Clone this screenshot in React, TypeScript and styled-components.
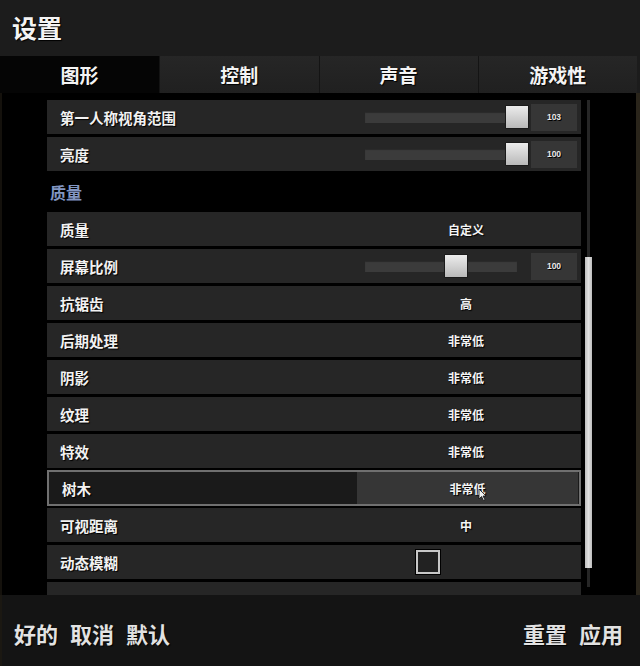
import React from "react";
import styled, { createGlobalStyle } from "styled-components";

const Global = createGlobalStyle`
  html, body { margin: 0; padding: 0; background: #000; }
  body { font-family: "Noto Sans CJK SC", "Noto Sans", sans-serif; color: #f2f2f2; }
  * { box-sizing: border-box; }
`;

const Frame = styled.div`
  width: 640px;
  height: 666px;
  display: flex;
  flex-direction: column;
  background: #000;
  overflow: hidden;
`;

const Header = styled.header`
  height: 56px;
  flex: none;
  background: #1c1c1c;
  display: flex;
  align-items: center;
  padding-left: 12px;
  padding-bottom: 2px;
`;

const Title = styled.h1`
  margin: 0;
  font-size: 25px;
  font-weight: 700;
  color: #f4f4f4;
  text-shadow: 1px 1px 1px #000;
`;

const Tabs = styled.nav`
  height: 37px;
  flex: none;
  display: grid;
  grid-template-columns: repeat(4, 1fr);
  background: #1c1c1c;
  padding-right: 3px;
`;

const Tab = styled.div<{ $active?: boolean }>`
  display: flex;
  align-items: center;
  justify-content: center;
  font-size: 19px;
  font-weight: 700;
  color: #f4f4f4;
  text-shadow: 1px 1px 1px #000;
  background: ${(p) => (p.$active ? "#050505" : "linear-gradient(#262626, #202020)")};
  border-left: ${(p) => (p.$active ? "none" : "1px solid #141414")};
  padding-bottom: 1px;
`;

const Body = styled.main`
  flex: 1;
  display: flex;
  background: #000;
  overflow: hidden;
  border-right: 4px solid #2a251b;
  border-left: 2px solid #14110c;
`;

const List = styled.div`
  width: 534px;
  margin-left: 45px;
  padding-top: 7px;
  display: flex;
  flex-direction: column;
  gap: 3px;
`;

const Row = styled.div<{ $selected?: boolean }>`
  flex: none;
  display: grid;
  grid-template-columns: 308px 1fr;
  align-items: stretch;
  background: ${(p) => (p.$selected ? "#1a1a1a" : "#262626")};
  border: ${(p) => (p.$selected ? "2px solid #707070" : "none")};
  margin: ${(p) => (p.$selected ? "-1px 0 -1px 0" : "0")};
  height: ${(p) => (p.$selected ? "36px" : "34px")};
`;

const Label = styled.div`
  display: flex;
  align-items: center;
  padding-left: 13px;
  font-size: 14.5px;
  font-weight: 700;
  color: #f2f2f2;
  text-shadow: 1px 1px 1px #000;
`;

const ValueCell = styled.div<{ $selected?: boolean; $start?: boolean }>`
  position: relative;
  display: flex;
  align-items: center;
  justify-content: ${(p) => (p.$start ? "flex-start" : "center")};
  padding-left: ${(p) => (p.$start ? "61px" : "0")};
  margin-right: ${(p) => (p.$selected ? "1px" : "4px")};
  background: ${(p) => (p.$selected ? "#363636" : "transparent")};
  font-size: 12px;
  font-weight: 700;
  color: #f4f4f4;
  text-shadow: 1px 1px 1px #000;
`;

const SliderCell = styled.div`
  display: flex;
  align-items: center;
  padding-left: 10px;
  padding-right: 4px;
`;

const Track = styled.div`
  position: relative;
  width: 152px;
  height: 11px;
  background: #3b3b3b;
  box-shadow: inset 0 1px 1px #2a2a2a;
`;

const Thumb = styled.div`
  position: absolute;
  top: 50%;
  width: 24px;
  height: 24px;
  transform: translate(-50%, -50%);
  background: linear-gradient(#ececec, #b9b9b9);
  border: 1px solid #1a1a1a;
  border-radius: 1px;
`;

const NumBox = styled.div`
  margin-left: auto;
  width: 46px;
  height: 27px;
  background: #363636;
  display: flex;
  align-items: center;
  justify-content: center;
  font-family: "Liberation Sans", Arial, sans-serif;
  font-size: 8.5px;
  font-weight: 700;
  color: #e8e8e8;
  text-shadow: 1px 1px 0 #000;
`;

const Section = styled.div`
  flex: none;
  height: 35px;
  display: flex;
  align-items: center;
  padding-left: 3px;
  font-size: 16px;
  font-weight: 700;
  color: #8296c2;
`;

const Check = styled.div`
  width: 24px;
  height: 24px;
  border: 2px solid #c8c8c8;
  background: #222;
  box-shadow: 0 0 0 1px #000;
`;

const Cursor = styled.svg`
  position: absolute;
  left: 121px;
  top: 16px;
`;

const ScrollCol = styled.div`
  width: 8px;
  margin-left: 3px;
  padding-top: 7px;
  display: flex;
  flex-direction: column;
  align-items: center;
`;

const ScrollTrack = styled.div`
  width: 3px;
  flex: 1;
  margin-bottom: 8px;
  background: #262626;
  display: flex;
  flex-direction: column;
  align-items: center;
`;

const ScrollThumb = styled.div`
  flex: none;
  width: 7px;
  height: 311px;
  margin-top: 157px;
  background: linear-gradient(90deg, #bdbdbd, #e0e0e0, #bdbdbd);
`;

const Footer = styled.footer`
  height: 71px;
  flex: none;
  background: #141414;
  display: flex;
  align-items: center;
  justify-content: space-between;
  padding: 4px 17px 0 12px;
  border-left: 2px solid #1b1812;
`;

const BtnGroup = styled.div`
  display: flex;
  gap: 12px;
`;

const FootBtn = styled.span`
  font-size: 22px;
  font-weight: 700;
  color: #e2e2e2;
  text-shadow: 1px 1px 1px #000;
`;

type Item =
  | { kind: "slider"; label: string; pos: number; value: string }
  | { kind: "text"; label: string; value: string; selected?: boolean }
  | { kind: "check"; label: string }
  | { kind: "section"; label: string }
  | { kind: "blank" };

const items: Item[] = [
  { kind: "slider", label: "第一人称视角范围", pos: 1, value: "103" },
  { kind: "slider", label: "亮度", pos: 1, value: "100" },
  { kind: "section", label: "质量" },
  { kind: "text", label: "质量", value: "自定义" },
  { kind: "slider", label: "屏幕比例", pos: 0.6, value: "100" },
  { kind: "text", label: "抗锯齿", value: "高" },
  { kind: "text", label: "后期处理", value: "非常低" },
  { kind: "text", label: "阴影", value: "非常低" },
  { kind: "text", label: "纹理", value: "非常低" },
  { kind: "text", label: "特效", value: "非常低" },
  { kind: "text", label: "树木", value: "非常低", selected: true },
  { kind: "text", label: "可视距离", value: "中" },
  { kind: "check", label: "动态模糊" },
  { kind: "blank" },
];

export default function App() {
  return (
    <>
      <Global />
      <Frame>
        <Header>
          <Title>设置</Title>
        </Header>
        <Tabs>
          <Tab $active>图形</Tab>
          <Tab>控制</Tab>
          <Tab>声音</Tab>
          <Tab>游戏性</Tab>
        </Tabs>
        <Body>
          <List>
            {items.map((it, i) => {
              if (it.kind === "section") return <Section key={i}>{it.label}</Section>;
              if (it.kind === "blank") return <Row key={i} />;
              if (it.kind === "slider")
                return (
                  <Row key={i}>
                    <Label>{it.label}</Label>
                    <SliderCell>
                      <Track>
                        <Thumb style={{ left: `${it.pos * 100}%` }} />
                      </Track>
                      <NumBox>{it.value}</NumBox>
                    </SliderCell>
                  </Row>
                );
              if (it.kind === "check")
                return (
                  <Row key={i}>
                    <Label>{it.label}</Label>
                    <ValueCell $start>
                      <Check />
                    </ValueCell>
                  </Row>
                );
              return (
                <Row key={i} $selected={it.selected}>
                  <Label>{it.label}</Label>
                  <ValueCell $selected={it.selected}>
                    {it.value}
                    {it.selected && (
                      <Cursor width="9" height="13" viewBox="0 0 9 13">
                        <path d="M1 1 L1 11 L3.5 8.5 L5.5 12.5 L7 11.8 L5 8 L8 8 Z" fill="#f2f2f2" stroke="#111" strokeWidth="0.8" />
                      </Cursor>
                    )}
                  </ValueCell>
                </Row>
              );
            })}
          </List>
          <ScrollCol>
            <ScrollTrack>
              <ScrollThumb />
            </ScrollTrack>
          </ScrollCol>
        </Body>
        <Footer>
          <BtnGroup>
            <FootBtn>好的</FootBtn>
            <FootBtn>取消</FootBtn>
            <FootBtn>默认</FootBtn>
          </BtnGroup>
          <BtnGroup>
            <FootBtn>重置</FootBtn>
            <FootBtn>应用</FootBtn>
          </BtnGroup>
        </Footer>
      </Frame>
    </>
  );
}
